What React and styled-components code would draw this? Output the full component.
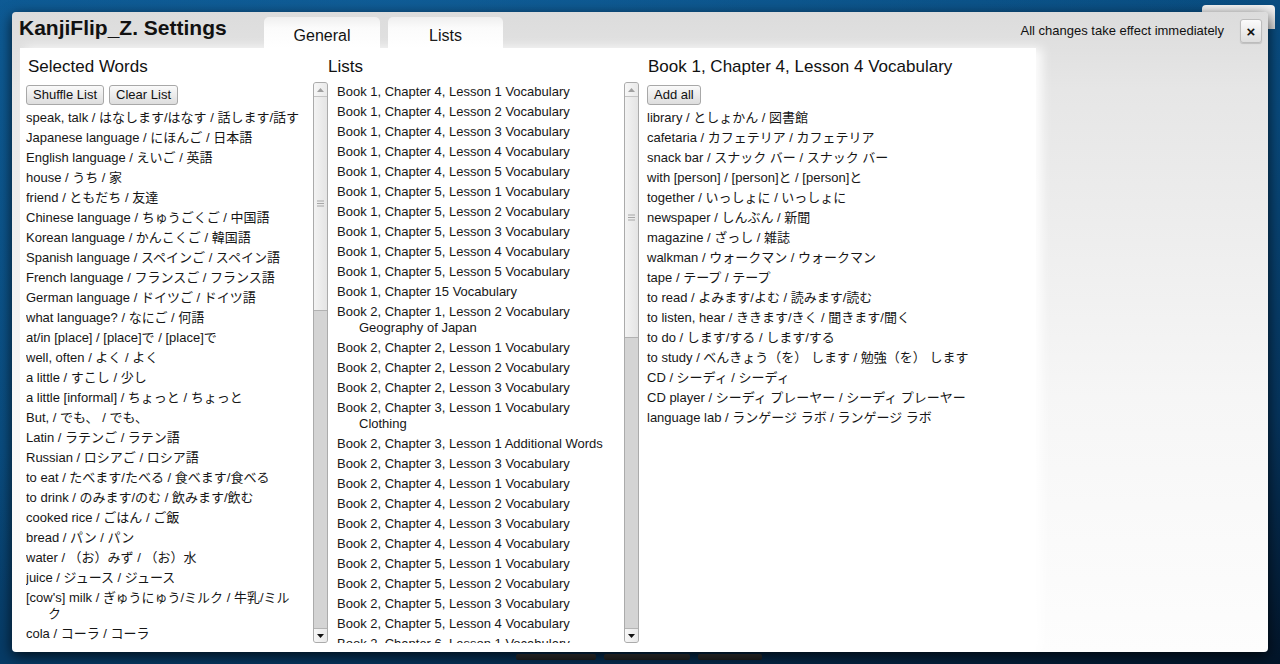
import React from 'react';
import styled, { createGlobalStyle } from 'styled-components';

const GlobalStyle = createGlobalStyle`
    html, body {
        margin: 0;
        padding: 0;
    }
    body {
        font-family: "Liberation Sans", "Noto Sans CJK JP", sans-serif;
        color: #161616;
    }
`;

const Desktop = styled.div`
    position: relative;
    width: 1280px;
    height: 664px;
    overflow: hidden;
    box-sizing: border-box;
    padding: 12px;
    background:
        radial-gradient(ellipse at 30% 0%, rgba(20, 100, 160, 0.55), rgba(0, 0, 0, 0) 70%),
        linear-gradient(165deg, #0b568f 0%, #094a7c 45%, #06345c 75%, #031529 100%);
`;

const BehindWindow = styled.div`
    position: absolute;
    left: 1202px;
    top: 5px;
    width: 73px;
    height: 24px;
    border-radius: 4px 4px 0 0;
    background: linear-gradient(#f4f4f4, #dcdcdc);
`;

const TaskItem = styled.div`
    position: absolute;
    top: 654px;
    height: 6px;
    left: ${(p) => p.$left}px;
    width: ${(p) => p.$width}px;
    border-radius: 2px;
    background: linear-gradient(#3a3a3a, #1c1c1c);
`;

const Dialog = styled.div`
    position: relative;
    width: 1256px;
    height: 640px;
    border-radius: 4px;
    overflow: hidden;
    display: flex;
    flex-direction: column;
    background: linear-gradient(#dcdcdc 0%, #e6e6e6 12%, #f6f6f6 60%, #fdfdfd 100%);
    box-shadow: 0 4px 14px rgba(0, 0, 0, 0.75);
`;

const TitleBar = styled.div`
    display: flex;
    align-items: flex-start;
    height: 36px;
    flex-shrink: 0;
    padding: 0 6px 0 7px;
`;

const Title = styled.h1`
    margin: 4px 0 0;
    width: 245px;
    flex-shrink: 0;
    font-size: 21px;
    line-height: 24px;
    font-weight: bold;
    white-space: nowrap;
    color: #111;
`;

const Tabs = styled.div`
    display: flex;
    gap: 8px;
    margin-top: 5px;
`;

const Tab = styled.div`
    width: ${(p) => p.$width}px;
    height: 31px;
    box-sizing: border-box;
    padding-top: 9px;
    border-radius: 5px 5px 0 0;
    background: linear-gradient(#efefef, #fbfbfb 35%, #ffffff);
    font-size: 16px;
    line-height: 20px;
    text-align: center;
    color: #111;
`;

const Notice = styled.div`
    margin: 11px 0 0 auto;
    font-size: 13px;
    line-height: 16px;
    color: #111;
`;

const CloseButton = styled.div`
    width: 22px;
    height: 24px;
    box-sizing: border-box;
    margin: 7px 0 0 16px;
    border: 1px solid #bcbcbc;
    border-radius: 3px;
    background: linear-gradient(#fbfbfb, #dedede);
    box-shadow: 0 1px 1px rgba(0, 0, 0, 0.15);
    display: flex;
    align-items: center;
    justify-content: center;
    font-size: 15px;
    font-weight: bold;
    color: #111;
`;

const Body = styled.div`
    flex: 1;
    display: flex;
    min-height: 0;
`;

const Panel = styled.div`
    width: 1016px;
    margin-left: 8px;
    box-sizing: border-box;
    padding: 0 0 9px 6px;
    display: flex;
    background: #fff;
    box-shadow: 6px 0 10px rgba(255, 255, 255, 0.9);
`;

const Column = styled.div`
    display: flex;
    flex-direction: column;
    width: ${(p) => (p.$width ? `${p.$width}px` : 'auto')};
    flex: ${(p) => (p.$width ? '0 0 auto' : '1')};
    min-height: 0;
`;

const Heading = styled.h2`
    margin: 9px 0 5px;
    padding-left: ${(p) => p.$indent || 0}px;
    font-size: 17px;
    line-height: 20px;
    font-weight: normal;
    color: #111;
    white-space: nowrap;
`;

const ListBox = styled.div`
    flex: 1;
    display: flex;
    min-height: 0;
`;

const ListContent = styled.div`
    flex: 1;
    overflow: hidden;
    padding-left: ${(p) => p.$left || 0}px;
    padding-right: ${(p) => p.$right || 0}px;
`;

const ButtonRow = styled.div`
    display: flex;
    gap: 5px;
    margin: 3px 0 3px;
`;

const Button = styled.button`
    height: 20px;
    box-sizing: border-box;
    padding: 0 6px;
    border: 1px solid #a8a8a8;
    border-radius: 3px;
    background: linear-gradient(#fafafa, #dddddd);
    font-family: "Liberation Sans", sans-serif;
    font-size: 13px;
    line-height: 18px;
    color: #111;
`;

const Item = styled.div`
    padding: 2px 0 2px 22px;
    text-indent: -22px;
    font-size: 13px;
    line-height: 16px;
    color: #161616;
`;

const Scrollbar = styled.div`
    width: 15px;
    flex-shrink: 0;
    box-sizing: border-box;
    display: flex;
    flex-direction: column;
    border: 1px solid #ababab;
    border-radius: 3px;
    background: #d4d4d4;
    overflow: hidden;
    margin-right: ${(p) => p.$gap || 0}px;
`;

const ScrollArrow = styled.div`
    height: 13px;
    flex-shrink: 0;
    display: flex;
    align-items: center;
    justify-content: center;
    background: linear-gradient(90deg, #f7f7f7, #e9e9e9);
    ${(p) => (p.$down ? 'border-top: 1px solid #b4b4b4;' : 'border-bottom: 1px solid #c4c4c4;')}
`;

const Thumb = styled.div`
    height: ${(p) => p.$size}px;
    flex-shrink: 0;
    display: flex;
    align-items: center;
    justify-content: center;
    background: linear-gradient(90deg, #f3f3f3, #e4e4e4);
    border-bottom: 1px solid #b2b2b2;
`;

const Track = styled.div`
    flex: 1;
`;

function FakeScrollbar({ thumb, gap }) {
    return (
        <Scrollbar $gap={gap}>
            <ScrollArrow>
                <svg width="7" height="4" viewBox="0 0 7 4">
                    <path d="M0 4 L3.5 0 L7 4 Z" fill="#a0a0a0" />
                </svg>
            </ScrollArrow>
            <Thumb $size={thumb}>
                <svg width="7" height="7" viewBox="0 0 7 7">
                    <path d="M0 1h7M0 3.5h7M0 6h7" stroke="#a6a6a6" strokeWidth="1" />
                </svg>
            </Thumb>
            <Track />
            <ScrollArrow $down>
                <svg width="7" height="4" viewBox="0 0 7 4">
                    <path d="M0 0 L7 0 L3.5 4 Z" fill="#111" />
                </svg>
            </ScrollArrow>
        </Scrollbar>
    );
}

const selectedWords = [
    'speak, talk / はなします/はなす / 話します/話す',
    'Japanese language / にほんご / 日本語',
    'English language / えいご / 英語',
    'house / うち / 家',
    'friend / ともだち / 友達',
    'Chinese language / ちゅうごくご / 中国語',
    'Korean language / かんこくご / 韓国語',
    'Spanish language / スペインご / スペイン語',
    'French language / フランスご / フランス語',
    'German language / ドイツご / ドイツ語',
    'what language? / なにご / 何語',
    'at/in [place] / [place]で / [place]で',
    'well, often / よく / よく',
    'a little / すこし / 少し',
    'a little [informal] / ちょっと / ちょっと',
    'But, / でも、 / でも、',
    'Latin / ラテンご / ラテン語',
    'Russian / ロシアご / ロシア語',
    'to eat / たべます/たべる / 食べます/食べる',
    'to drink / のみます/のむ / 飲みます/飲む',
    'cooked rice / ごはん / ご飯',
    'bread / パン / パン',
    'water / （お）みず / （お）水',
    'juice / ジュース / ジュース',
    "[cow's] milk / ぎゅうにゅう/ミルク / 牛乳/ミルク",
    'cola / コーラ / コーラ',
];

const lists = [
    'Book 1, Chapter 4, Lesson 1 Vocabulary',
    'Book 1, Chapter 4, Lesson 2 Vocabulary',
    'Book 1, Chapter 4, Lesson 3 Vocabulary',
    'Book 1, Chapter 4, Lesson 4 Vocabulary',
    'Book 1, Chapter 4, Lesson 5 Vocabulary',
    'Book 1, Chapter 5, Lesson 1 Vocabulary',
    'Book 1, Chapter 5, Lesson 2 Vocabulary',
    'Book 1, Chapter 5, Lesson 3 Vocabulary',
    'Book 1, Chapter 5, Lesson 4 Vocabulary',
    'Book 1, Chapter 5, Lesson 5 Vocabulary',
    'Book 1, Chapter 15 Vocabulary',
    'Book 2, Chapter 1, Lesson 2 Vocabulary Geography of Japan',
    'Book 2, Chapter 2, Lesson 1 Vocabulary',
    'Book 2, Chapter 2, Lesson 2 Vocabulary',
    'Book 2, Chapter 2, Lesson 3 Vocabulary',
    'Book 2, Chapter 3, Lesson 1 Vocabulary Clothing',
    'Book 2, Chapter 3, Lesson 1 Additional Words',
    'Book 2, Chapter 3, Lesson 3 Vocabulary',
    'Book 2, Chapter 4, Lesson 1 Vocabulary',
    'Book 2, Chapter 4, Lesson 2 Vocabulary',
    'Book 2, Chapter 4, Lesson 3 Vocabulary',
    'Book 2, Chapter 4, Lesson 4 Vocabulary',
    'Book 2, Chapter 5, Lesson 1 Vocabulary',
    'Book 2, Chapter 5, Lesson 2 Vocabulary',
    'Book 2, Chapter 5, Lesson 3 Vocabulary',
    'Book 2, Chapter 5, Lesson 4 Vocabulary',
    'Book 2, Chapter 6, Lesson 1 Vocabulary',
];

const vocabulary = [
    'library / としょかん / 図書館',
    'cafetaria / カフェテリア / カフェテリア',
    'snack bar / スナック バー / スナック バー',
    'with [person] / [person]と / [person]と',
    'together / いっしょに / いっしょに',
    'newspaper / しんぶん / 新聞',
    'magazine / ざっし / 雑誌',
    'walkman / ウォークマン / ウォークマン',
    'tape / テープ / テープ',
    'to read / よみます/よむ / 読みます/読む',
    'to listen, hear / ききます/きく / 聞きます/聞く',
    'to do / します/する / します/する',
    'to study / べんきょう（を） します / 勉強（を） します',
    'CD / シーディ / シーディ',
    'CD player / シーディ プレーヤー / シーディ プレーヤー',
    'language lab / ランゲージ ラボ / ランゲージ ラボ',
];

export default function App() {
    return (
        <>
            <GlobalStyle />
            <Desktop>
                <BehindWindow />
                <TaskItem $left={516} $width={80} />
                <TaskItem $left={604} $width={86} />
                <TaskItem $left={698} $width={64} />
                <Dialog>
                    <TitleBar>
                        <Title>KanjiFlip_Z. Settings</Title>
                        <Tabs>
                            <Tab $width={116}>General</Tab>
                            <Tab $width={115}>Lists</Tab>
                        </Tabs>
                        <Notice>All changes take effect immediately</Notice>
                        <CloseButton>×</CloseButton>
                    </TitleBar>
                    <Body>
                        <Panel>
                            <Column $width={302}>
                                <Heading $indent={2}>Selected Words</Heading>
                                <ListBox>
                                    <ListContent $right={13}>
                                        <ButtonRow>
                                            <Button>Shuffle List</Button>
                                            <Button>Clear List</Button>
                                        </ButtonRow>
                                        {selectedWords.map((w) => (
                                            <Item key={w}>{w}</Item>
                                        ))}
                                    </ListContent>
                                    <FakeScrollbar thumb={213} />
                                </ListBox>
                            </Column>
                            <Column $width={312}>
                                <Heading>Lists</Heading>
                                <ListBox>
                                    <ListContent $left={9} $right={4}>
                                        {lists.map((l) => (
                                            <Item key={l}>{l}</Item>
                                        ))}
                                    </ListContent>
                                    <FakeScrollbar thumb={240} gap={1} />
                                </ListBox>
                            </Column>
                            <Column>
                                <Heading $indent={8}>Book 1, Chapter 4, Lesson 4 Vocabulary</Heading>
                                <ListBox>
                                    <ListContent $left={7}>
                                        <ButtonRow>
                                            <Button>Add all</Button>
                                        </ButtonRow>
                                        {vocabulary.map((v) => (
                                            <Item key={v}>{v}</Item>
                                        ))}
                                    </ListContent>
                                </ListBox>
                            </Column>
                        </Panel>
                    </Body>
                </Dialog>
            </Desktop>
        </>
    );
}
